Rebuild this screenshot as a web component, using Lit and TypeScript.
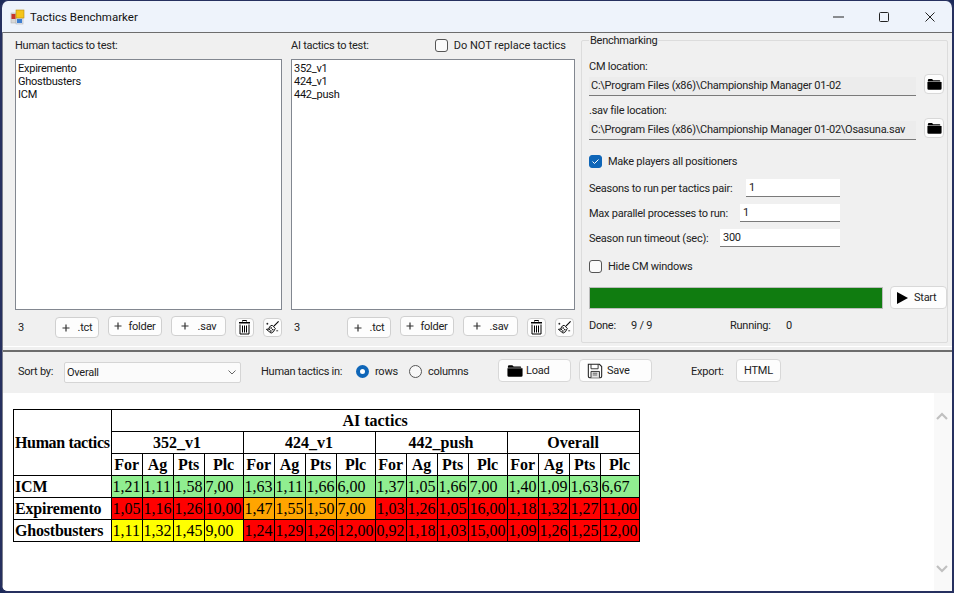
import { LitElement, html, css, svg } from 'lit';
import { customElement } from 'lit/decorators.js';

const PLUS = svg`<path d="M4 .5v7M.5 4h7" stroke="#333" stroke-width="1.200" fill="none"/>`;

const folderIcon = html`<svg class="ico" width="16" height="13" viewBox="0 0 18 14">
  <path d="M1 2.500Q1 1 2.500 1H6l1.500 1.500H15Q16 2.500 16 3.500V4H1z M.5 4.500H17.500V12.500Q17.500 14 16 14H2Q.5 14 .5 12.500z" fill="#000"/>
</svg>`;

const trashIcon = html`<svg width="13" height="15" viewBox="0 0 13 15">
  <path d="M4.500 1.500V.5h4v1M2 4.500V14h9V4.500M4.500 5.500v7M6.500 5.500v7M8.500 5.500v7" fill="none" stroke="#000" stroke-width="1"/>
  <path d="M1 2h11v1.500H1z" fill="#000"/>
</svg>`;

const broomIcon = html`<svg width="15" height="15" viewBox="0 0 16 16">
  <path d="M14.500 1.500 9.500 6.500" stroke="#000" stroke-width="1.200" fill="none"/>
  <path d="M7.500 5.500l3.500 3.500-2 3.500-2.500 1.500-5-4 2.500-.5 1-2.500z" fill="#fff" stroke="#000" stroke-width="1"/>
  <path d="M4 9.500l3 3M6 8l3 3" stroke="#000" stroke-width="1.400" stroke-dasharray="1.500 1"/>
  <path d="M1.500 4h2M2.500 3v2M12 11.500h2" stroke="#000" stroke-width=".8"/>
</svg>`;

const saveIcon = html`<svg width="16" height="16" viewBox="0 0 18 18">
  <path d="M1.500 1.500H14L16.500 4V15Q16.500 16.500 15 16.500H3Q1.500 16.500 1.500 15z" fill="#fff" stroke="#222" stroke-width="1.200"/>
  <path d="M4.500 1.500V6.500H12.500V1.500" fill="none" stroke="#222"/>
  <path d="M4.500 16.500V9.500H14V16.500" fill="#e4e4e4" stroke="#222"/>
  <path d="M6.500 11.500h5M6.500 13.500h5" stroke="#555"/>
</svg>`;

@customElement('tactics-list')
class TacticsList extends LitElement {
  static properties = {
    items: { attribute: false },
    wide: { type: Boolean, reflect: true },
  };
  items: string[] = [];
  wide = false;

  static styles = css`
    :host {
      display: flex;
      flex-direction: column;
      width: 267px;
      flex: none;
    }
    :host([wide]) { width: 284px; }
    .list {
      box-sizing: border-box;
      height: 251px;
      width: 100%;
      background: #fff;
      border: 1px solid #828790;
      padding: 2px;
      line-height: 13px;
      color: #111;
    }
    .list div { height: 13px; }
    .bar {
      display: flex;
      align-items: flex-start;
      height: 24px;
      margin-top: 6px;
    }
    .count { width: 40px; padding: 5px 0 0 3px; box-sizing: border-box; color: #222; flex: none; }
    :host([wide]) .count { width: 56px; }
    button {
      box-sizing: border-box;
      background: #fdfdfd;
      border: 1px solid #d0d0d0;
      border-radius: 4px;
      font: inherit;
      letter-spacing: inherit;
      color: #222;
      padding: 0;
      height: 20px;
      flex: none;
      display: flex;
      align-items: center;
      justify-content: center;
      margin-right: 9px;
    }
    .tct { width: 44px; height: 21px; margin-top: 1px; gap: 8px; }
    .folder { width: 54px; gap: 6px; }
    .sav { width: 55px; gap: 9px; }
    .icon { width: 19px; height: 19px; margin-top: 2px; }
    .icon:last-child { margin-right: 0; }
  `;

  render() {
    return html`
      <div class="list">${this.items.map((t) => html`<div>${t}</div>`)}</div>
      <div class="bar">
        <span class="count">${this.items.length}</span>
        <button class="tct"><svg width="8" height="8">${PLUS}</svg>.tct</button>
        <button class="folder"><svg width="8" height="8">${PLUS}</svg>folder</button>
        <button class="sav"><svg width="8" height="8">${PLUS}</svg>.sav</button>
        <button class="icon">${trashIcon}</button>
        <button class="icon">${broomIcon}</button>
      </div>
    `;
  }
}

type Cell = [string, string, string, string];
const COLS = ['352_v1', '424_v1', '442_push', 'Overall'];
const ROWS: { name: string; cells: { c: string; v: Cell }[] }[] = [
  { name: 'ICM', cells: [
    { c: 'g', v: ['1,21', '1,11', '1,58', '7,00'] },
    { c: 'g', v: ['1,63', '1,11', '1,66', '6,00'] },
    { c: 'g', v: ['1,37', '1,05', '1,66', '7,00'] },
    { c: 'g', v: ['1,40', '1,09', '1,63', '6,67'] },
  ] },
  { name: 'Expiremento', cells: [
    { c: 'r', v: ['1,05', '1,16', '1,26', '10,00'] },
    { c: 'o', v: ['1,47', '1,55', '1,50', '7,00'] },
    { c: 'r', v: ['1,03', '1,26', '1,05', '16,00'] },
    { c: 'r', v: ['1,18', '1,32', '1,27', '11,00'] },
  ] },
  { name: 'Ghostbusters', cells: [
    { c: 'y', v: ['1,11', '1,32', '1,45', '9,00'] },
    { c: 'r', v: ['1,24', '1,29', '1,26', '12,00'] },
    { c: 'r', v: ['0,92', '1,18', '1,03', '15,00'] },
    { c: 'r', v: ['1,09', '1,26', '1,25', '12,00'] },
  ] },
];

@customElement('app-root')
class AppRoot extends LitElement {
  static styles = css`
    :host {
      display: block;
      width: 954px;
      height: 593px;
      background: #1c2a5a;
      font-family: 'Roboto', 'Liberation Sans', sans-serif;
      font-size: 11px;
      letter-spacing: -0.25px;
      color: #222;
      overflow: hidden;
    }
    .window {
      box-sizing: border-box;
      width: 954px;
      height: 593px;
      display: flex;
      flex-direction: column;
      border: 1px solid #26305f;
      border-left-width: 2px;
      border-right-width: 2px;
      border-bottom-width: 2px;
      border-radius: 8px 8px 0 8px;
      background: #eef3fb;
      overflow: hidden;
    }
    .title {
      height: 31px;
      flex: none;
      display: flex;
      align-items: center;
      padding-left: 8px;
      gap: 4px;
      font-size: 11.500px;
      letter-spacing: 0;
      color: #111;
    }
    .caption { margin-left: auto; margin-right: -1px; display: flex; }
    .caption span {
      width: 46px;
      height: 30px;
      display: flex;
      align-items: center;
      justify-content: center;
    }
    .client {
      flex: 1;
      min-height: 0;
      display: flex;
      flex-direction: column;
      border-left: 1px solid #7c7f8c;
    }
    .top {
      flex: none;
      height: 314px;
      box-sizing: border-box;
      border-top: 1px solid #6d6d6d;
      background: #f0f0f0;
      display: flex;
      padding-left: 12px;
    }
    .col { display: flex; flex-direction: column; margin-top: 6px; }
    .col + .col { margin-left: 9px; }
    .col-h { height: 20px; display: flex; align-items: flex-start; white-space: nowrap; }
    .dont { margin-left: auto; display: flex; align-items: center; gap: 6px; margin-right: 9px; letter-spacing: 0; }
    .check {
      box-sizing: border-box;
      width: 13px;
      height: 13px;
      border: 1px solid #555;
      border-radius: 3px;
      background: #fbfbfb;
      flex: none;
    }
    .check.on { background: #0f66b8; border-color: #0f66b8; display: flex; }
    fieldset {
      flex: none;
      width: 367px;
      height: 310px;
      margin: 0 0 0 6px;
      padding: 0 0 0 7px;
      min-width: 0;
      box-sizing: border-box;
      border: 1px solid #dcdcdc;
      border-radius: 2px;
    }
    legend { padding: 1px 1px 0; margin-left: 0; }
    .lbl { height: 17px; margin-top: 13px; line-height: 14px; }
    .lbl.second { margin-top: 8px; }
    .path { display: flex; align-items: flex-start; gap: 8px; }
    .field {
      box-sizing: border-box;
      border-bottom: 1px solid #7a7a7a;
      background: #ececec;
      color: #222;
      height: 19px;
      line-height: 18px;
      width: 327px;
      padding-left: 2px;
      white-space: nowrap;
      overflow: hidden;
      flex: none;
    }
    .browse {
      box-sizing: border-box;
      width: 20px;
      height: 20px;
      margin-top: -3px;
      background: #fdfdfd;
      border: 1px solid #d8d8d8;
      border-radius: 4px;
      display: flex;
      align-items: center;
      justify-content: center;
      flex: none;
    }
    .browse .ico { width: 15px; height: 12px; }
    .chk-row { display: flex; align-items: center; gap: 6px; height: 16px; }
    .chk-row.make { margin-top: 13px; }
    .chk-row.hide { margin-top: 11px; }
    .num-rows { margin-top: 10px; display: flex; flex-direction: column; gap: 7px; width: 251px; }
    .num-row { display: flex; align-items: center; justify-content: space-between; height: 18px; white-space: nowrap; }
    .num {
      box-sizing: border-box;
      height: 18px;
      background: #fff;
      border-bottom: 1px solid #7a7a7a;
      line-height: 18px;
      padding-left: 3px;
      flex: none;
    }
    .run { display: flex; gap: 7px; margin-top: 12px; align-items: flex-start; }
    .progress {
      width: 294px;
      height: 22px;
      margin-top: 1px;
      background: #107c10;
      border: 1px solid #bcbcbc;
      box-sizing: border-box;
      flex: none;
    }
    .start {
      box-sizing: border-box;
      width: 57px;
      height: 23px;
      background: #fdfdfd;
      border: 1px solid #d8d8d8;
      border-radius: 4px;
      display: flex;
      align-items: center;
      gap: 6px;
      padding-left: 6px;
      flex: none;
    }
    .status { display: flex; margin-top: 10px; height: 14px; line-height: 14px; }
    .status .a { width: 42px; }
    .status .b { width: 99px; }
    .status .c { width: 56px; }
    .split {
      flex: none;
      height: 6px;
      box-sizing: border-box;
      border-top: 1px solid #fff;
      border-bottom: 2px solid #6d6d6d;
      background: #f0f0f0;
    }
    .tools {
      flex: none;
      height: 41px;
      background: #f0f0f0;
      display: flex;
      align-items: center;
      padding: 0 0 4px 15px;
      box-sizing: border-box;
      white-space: nowrap;
    }
    .tools > span { flex: none; margin-top: 1px; }
    .sort { width: 46px; }
    .sel {
      box-sizing: border-box;
      width: 177px;
      height: 21px;
      margin-top: 4px;
      background: #fbfbfb;
      border: 1px solid #d5d5d5;
      border-radius: 2px;
      display: flex;
      align-items: center;
      justify-content: space-between;
      padding: 0 4px 0 2px;
      flex: none;
    }
    .tools > .htin { margin-left: 20px; width: 95px; }
    .radio {
      box-sizing: border-box;
      width: 13px;
      height: 13px;
      border-radius: 50%;
      border: 1px solid #555;
      background: #f8f8f8;
      flex: none;
    }
    .radio.on { border: 4px solid #0f66b8; background: #fff; }
    .opt { display: flex; align-items: center; gap: 6px; flex: none; margin-top: 1px; }
    .opt.first { width: 53px; }
    .opt.next { width: 89px; }
    .tbtn {
      box-sizing: border-box;
      height: 23px;
      background: #fdfdfd;
      border: 1px solid #d8d8d8;
      border-radius: 4px;
      display: flex;
      align-items: center;
      flex: none;
    }
    .load { width: 73px; gap: 3px; padding-left: 8px; }
    .save { width: 73px; margin-left: 8px; padding-left: 7px; gap: 4px; }
    .tools > .export { margin-left: 39px; width: 45px; }
    .html { width: 45px; justify-content: center; }
    .web {
      flex: 1;
      min-height: 0;
      background: #fff;
      display: flex;
      justify-content: space-between;
    }
    table {
      border-collapse: collapse;
      font-family: 'Liberation Serif', serif;
      font-size: 16px;
      letter-spacing: 0;
      color: #000;
      margin: 16px 0 0 10px;
      align-self: flex-start;
      border: 1px solid #000;
    }
    th, td { border: 1px solid #000; padding: 1px; height: 19px; line-height: 18px; box-sizing: content-box; }
    th { text-align: center; }
    td { white-space: nowrap; }
    .corner { letter-spacing: -0.35px; white-space: nowrap; }
    .name { font-weight: bold; text-align: left; letter-spacing: -0.2px; }
    .g { background: #90ee90; }
    .r { background: #ff0000; }
    .o { background: #ffa500; }
    .y { background: #ffff00; }
    .scroll {
      width: 18px;
      background: #f9f9f9;
      display: flex;
      flex-direction: column;
      justify-content: space-between;
      align-items: center;
      padding: 19px 2px 18px 0;
      box-sizing: border-box;
    }
  `;

  render() {
    return html`
      <div class="window">
        <div class="title">
          <svg width="16" height="16" viewBox="0 0 16 16">
            <rect x="1" y="4" width="5" height="10" fill="#d8d8d8" stroke="#aaa" stroke-width=".5"/>
            <rect x="6" y="9" width="7" height="6" fill="#dfe6f2" stroke="#aaa" stroke-width=".5"/>
            <rect x="1.500" y="5" width="4" height="5" fill="#c8352b"/>
            <rect x="6" y="1" width="8" height="8" fill="#f5c518" stroke="#b98a10" stroke-width=".6"/>
            <rect x="7" y="10" width="5" height="4" fill="#3f7fd0"/>
          </svg>
          <span>Tactics Benchmarker</span>
          <div class="caption">
            <span><svg width="11" height="2"><path d="M0 1h11" stroke="#222"/></svg></span>
            <span><svg width="10" height="10"><rect x=".5" y=".5" width="9" height="9" rx="1" fill="none" stroke="#222"/></svg></span>
            <span><svg width="10" height="10"><path d="M.5.5l9 9M9.500.5l-9 9" stroke="#222" fill="none"/></svg></span>
          </div>
        </div>
        <div class="client">
          <div class="top">
            <div class="col">
              <div class="col-h">Human tactics to test:</div>
              <tactics-list .items=${['Expiremento', 'Ghostbusters', 'ICM']}></tactics-list>
            </div>
            <div class="col">
              <div class="col-h">AI tactics to test:
                <label class="dont"><span class="check"></span>Do NOT replace tactics</label>
              </div>
              <tactics-list wide .items=${['352_v1', '424_v1', '442_push']}></tactics-list>
            </div>
            <fieldset>
              <legend>Benchmarking</legend>
              <div class="lbl">CM location:</div>
              <div class="path">
                <div class="field">C:\\Program Files (x86)\\Championship Manager 01-02</div>
                <div class="browse">${folderIcon}</div>
              </div>
              <div class="lbl second">.sav file location:</div>
              <div class="path">
                <div class="field">C:\\Program Files (x86)\\Championship Manager 01-02\\Osasuna.sav</div>
                <div class="browse">${folderIcon}</div>
              </div>
              <div class="chk-row make">
                <span class="check on"><svg width="11" height="11" viewBox="0 0 11 11"><path d="M2.500 5.500l2 2 4-4" fill="none" stroke="#fff" stroke-width="1"/></svg></span>
                Make players all positioners
              </div>
              <div class="num-rows">
                <div class="num-row"><span>Seasons to run per tactics pair:</span><span class="num" style="width:94px">1</span></div>
                <div class="num-row"><span>Max parallel processes to run:</span><span class="num" style="width:100px">1</span></div>
                <div class="num-row"><span>Season run timeout (sec):</span><span class="num" style="width:120px">300</span></div>
              </div>
              <div class="chk-row hide"><span class="check"></span>Hide CM windows</div>
              <div class="run">
                <div class="progress"></div>
                <div class="start">
                  <svg width="11" height="12" viewBox="0 0 11 12"><path d="M0 0l11 6-11 6z" fill="#000"/></svg>Start
                </div>
              </div>
              <div class="status">
                <span class="a">Done:</span><span class="b">9 / 9</span><span class="c">Running:</span><span>0</span>
              </div>
            </fieldset>
          </div>
          <div class="split"></div>
          <div class="tools">
            <span class="sort">Sort by:</span>
            <div class="sel"><span>Overall</span>
              <svg width="8" height="5" viewBox="0 0 8 5"><path d="M.5.500 4 4 7.500.5" fill="none" stroke="#666"/></svg>
            </div>
            <span class="htin">Human tactics in:</span>
            <label class="opt first"><span class="radio on"></span>rows</label>
            <label class="opt next"><span class="radio"></span>columns</label>
            <div class="tbtn load">${folderIcon}Load</div>
            <div class="tbtn save">${saveIcon}Save</div>
            <span class="export">Export:</span>
            <div class="tbtn html">HTML</div>
          </div>
          <div class="web">
            <table>
              <tr>
                <th rowspan="3" class="corner">Human tactics</th>
                <th colspan="16">AI tactics</th>
              </tr>
              <tr>${COLS.map((c) => html`<th colspan="4">${c}</th>`)}</tr>
              <tr>${COLS.map(() => ['For', 'Ag', 'Pts', 'Plc'].map((h) => html`<th>${h}</th>`))}</tr>
              ${ROWS.map((r) => html`
                <tr>
                  <td class="name">${r.name}</td>
                  ${r.cells.map((g) => g.v.map((v) => html`<td class=${g.c}>${v}</td>`))}
                </tr>
              `)}
            </table>
            <div class="scroll">
              <svg width="12" height="8" viewBox="0 0 12 8"><path d="M1 7l5-5 5 5" fill="none" stroke="#c0c0c0" stroke-width="2.200"/></svg>
              <svg width="12" height="8" viewBox="0 0 12 8"><path d="M1 1l5 5 5-5" fill="none" stroke="#c0c0c0" stroke-width="2.200"/></svg>
            </div>
          </div>
        </div>
      </div>
    `;
  }
}
